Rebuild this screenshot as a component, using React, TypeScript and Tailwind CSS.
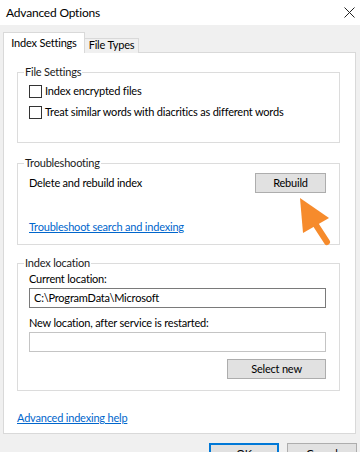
const font = { fontFamily: 'Lato, "Noto Sans", sans-serif' };

const CheckRow = ({ label }: { label: string }) => (
  <div className="flex h-[16px] items-center gap-x-[3px] pl-[11px]">
    <div className="h-[13px] w-[13px] border border-[#333333] bg-white" />
    <span>{label}</span>
  </div>
);

const GroupBox = ({
  title,
  className,
  children,
}: {
  title: string;
  className: string;
  children: React.ReactNode;
}) => (
  <div className={`flex flex-col border border-[#dcdcdc] ${className}`}>
    <span className="-mt-[9px] ml-[6px] w-fit bg-white px-[1px] leading-[16px] text-[#1a1a1a]">
      {title}
    </span>
    {children}
  </div>
);

const Button = ({ label, className }: { label: string; className: string }) => (
  <div
    className={`flex h-[20px] items-center justify-center border border-[#adadad] bg-[#e1e1e1] ${className}`}
  >
    {label}
  </div>
);

const App = () => {
  return (
    <div
      className="relative h-[452px] w-[360px] overflow-hidden whitespace-nowrap bg-[#f0f0f0] text-[11px] tracking-[-0.2px] text-black"
      style={font}
    >
      {/* title bar */}
      <div className="flex h-[25px] items-center justify-between bg-white pl-[6px] pr-[5px]">
        <span className="text-[12px]">Advanced Options</span>
        <svg width="11" height="11" viewBox="0 0 11 11">
          <path d="M0.5 0.5 L10.5 10.5 M10.5 0.5 L0.5 10.5" stroke="#222" strokeWidth="1" />
        </svg>
      </div>

      {/* tabs */}
      <div className="ml-[3px] mt-[7px] flex items-end">
        <div className="relative z-10 flex h-[21px] w-[82px] items-start justify-center border border-b-0 border-[#d9d9d9] bg-white pt-[2px]">
          Index Settings
        </div>
        <div className="-ml-px flex h-[15px] w-[55px] items-center justify-center border border-b-0 border-[#d9d9d9] bg-[#f0f0f0] pb-[1px]">
          File Types
        </div>
      </div>

      {/* panel */}
      <div className="-mt-px ml-[3px] flex h-[382px] w-[353px] flex-col border border-[#d9d9d9] bg-white pl-[13px] pt-[19px]">
        <GroupBox title="File Settings" className="h-[71px] w-[323px]">
          <div className="mt-[3px] flex flex-col gap-y-[5px]">
            <CheckRow label="Index encrypted files" />
            <CheckRow label="Treat similar words with diacritics as different words" />
          </div>
        </GroupBox>

        <GroupBox title="Troubleshooting" className="mt-[20px] h-[82px] w-[323px]">
          <div className="mt-[2px] flex h-[20px] items-center justify-between pl-[11px] pr-[13px]">
            <span>Delete and rebuild index</span>
            <Button label="Rebuild" className="w-[71px]" />
          </div>
          <span className="ml-[11px] mt-[26px] w-fit leading-[16px] text-[#0066cc] underline">
            Troubleshoot search and indexing
          </span>
        </GroupBox>

        <GroupBox title="Index location" className="mt-[18px] h-[128px] w-[323px]">
          <div className="flex flex-col pl-[11px] pr-[13px]">
            <span className="leading-[16px]">Current location:</span>
            <div className="mt-[1px] flex h-[20px] w-[297px] items-center border border-[#7a7a7a] px-[4px]">
              C:\ProgramData\Microsoft
            </div>
            <span className="mt-[7px] leading-[16px]">New location, after service is restarted:</span>
            <div className="mt-[1px] h-[20px] w-[297px] border border-[#c4c4c4]" />
            <div className="mt-[7px] flex justify-end">
              <Button label="Select new" className="w-[99px]" />
            </div>
          </div>
        </GroupBox>

        <span className="mt-[19px] w-fit leading-[16px] text-[#0066cc] underline">
          Advanced indexing help
        </span>
      </div>

      {/* dialog buttons */}
      <div className="mt-[9px] flex justify-end gap-x-[8px] pr-[3px]">
        <div className="flex h-[23px] w-[70px] items-center justify-center border-2 border-[#0078d7] bg-[#e1e1e1]">
          OK
        </div>
        <div className="flex h-[23px] w-[70px] items-center justify-center border border-[#adadad] bg-[#e1e1e1]">
          Cancel
        </div>
      </div>

      {/* pointer arrow */}
      <svg
        className="pointer-events-none absolute left-0 top-0"
        width="360"
        height="452"
        viewBox="0 0 360 452"
      >
        <line x1="314" y1="222" x2="327" y2="242" stroke="#f68b2c" strokeWidth="6" strokeLinecap="round" />
        <polygon points="300,198 303,233 329,218" fill="#f68b2c" />
      </svg>
    </div>
  );
};

export default App;
